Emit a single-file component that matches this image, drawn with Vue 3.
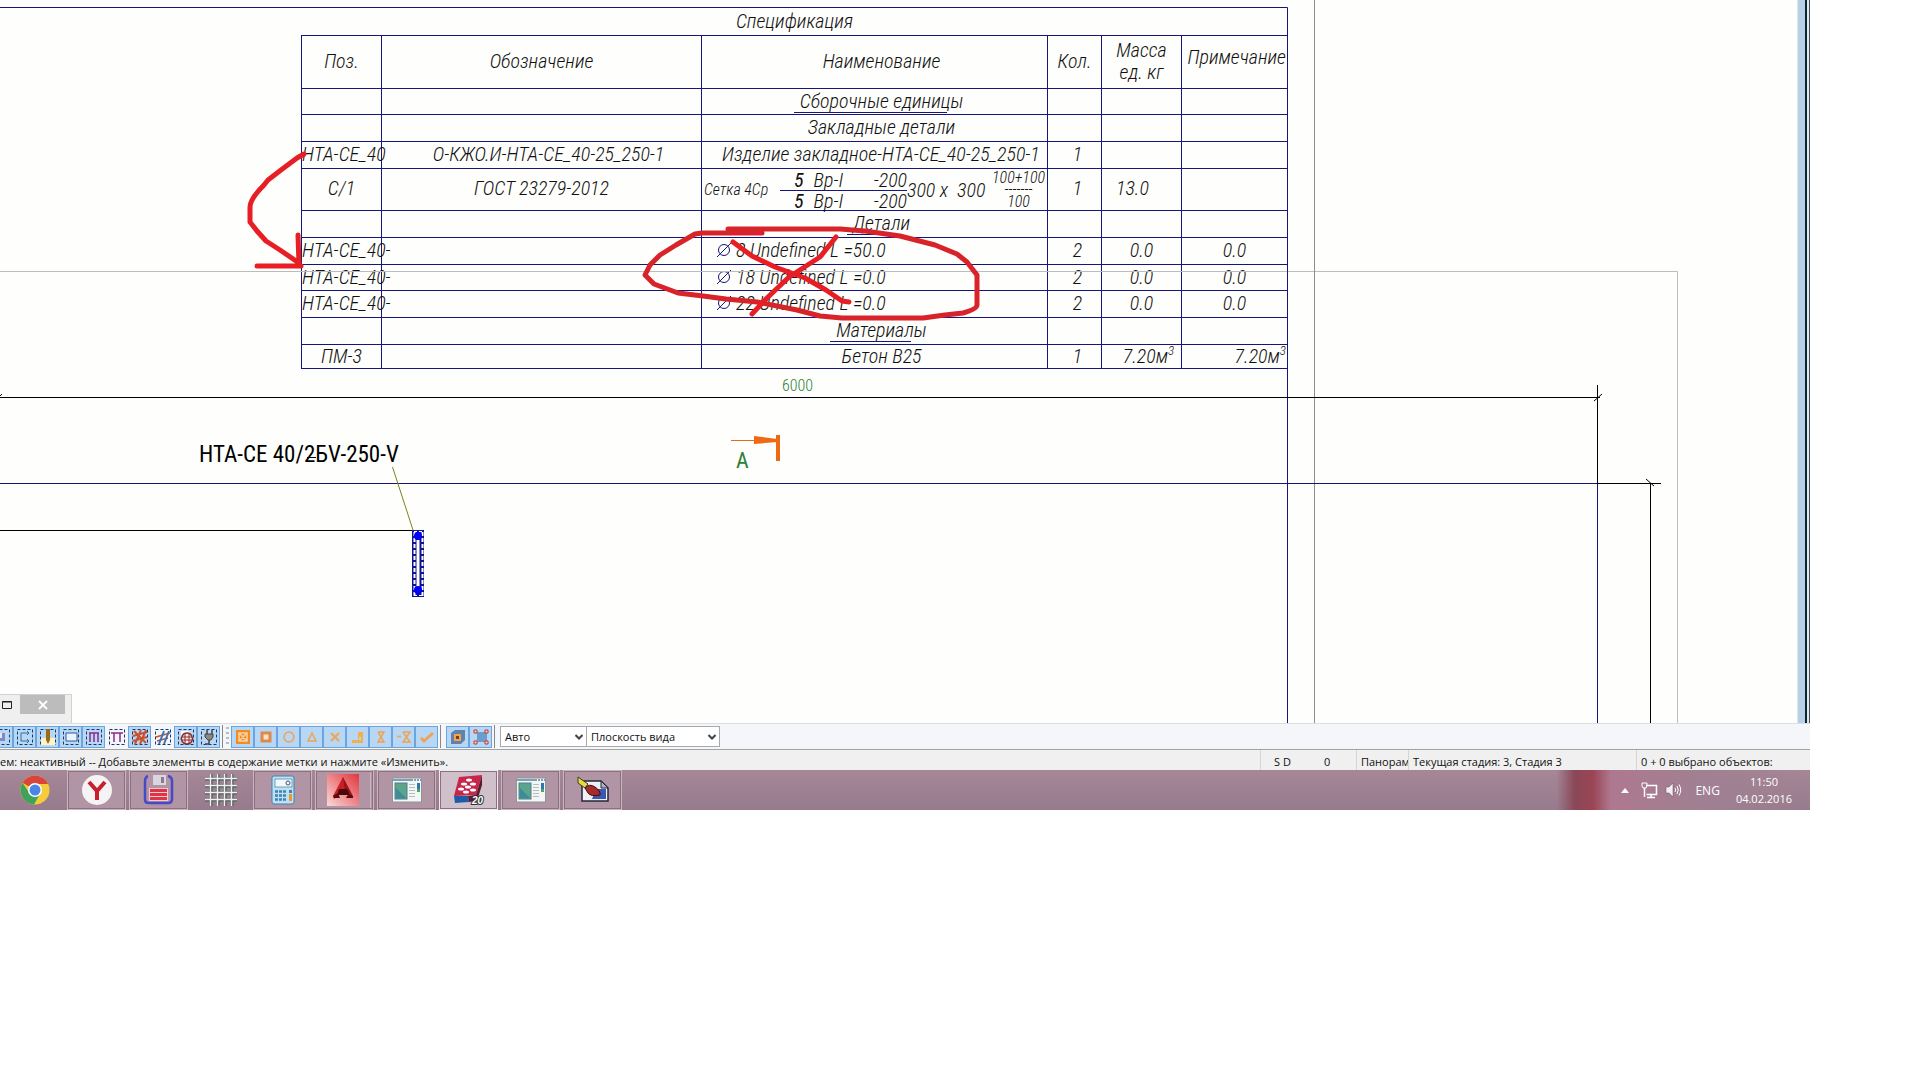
<template>
  <main class="app">
    <section class="canvas" aria-label="Чертёж">
      <div class="sheet">
        <table class="spec">
          <caption>Спецификация</caption>
          <colgroup>
            <col class="c-pos" />
            <col class="c-des" />
            <col class="c-name" />
            <col class="c-qty" />
            <col class="c-mass" />
            <col class="c-note" />
          </colgroup>
          <thead>
            <tr class="head">
              <th scope="col">Поз.</th>
              <th scope="col">Обозначение</th>
              <th scope="col" class="shifted">Наименование</th>
              <th scope="col">Кол.</th>
              <th scope="col">Масса<br />ед. кг</th>
              <th scope="col" class="right high">Примечание</th>
            </tr>
          </thead>
          <tbody>
            <tr v-for="(r, i) in rows" :key="i" :class="r.kind">
              <td :class="{ left: r.overflow }">{{ r.pos }}</td>
              <td :class="{ shifted: r.kind === 'product' }">{{ r.des }}</td>
              <td v-if="r.kind === 'mesh'">
                <div class="mesh-name">
                  <span class="mesh-label">Сетка 4Ср</span>
                  <span class="frac">
                    <span class="frac-line"><b>5</b><span>Вр-I</span><span>-200</span></span>
                    <span class="frac-line under"><b>5</b><span>Вр-I</span><span>-200</span></span>
                  </span>
                  <span class="mesh-size">300 х&nbsp; 300</span>
                  <span class="ratio">
                    <span>100+100</span>
                    <span class="ratio-bar">-------</span>
                    <span>100</span>
                  </span>
                </div>
              </td>
              <td v-else-if="r.bar" class="left">
                <span class="bar-name">
                  <svg class="dia" width="16" height="16" viewBox="0 0 16 16" aria-hidden="true">
                    <circle cx="8" cy="8" r="5.5" />
                    <path d="M1 15 15 1" />
                  </svg>
                  {{ r.name }}
                </span>
              </td>
              <td v-else :class="r.kind === 'product' ? 'indent' : 'shifted'">
                <span :class="{ underlined: r.underlined }">{{ r.name }}</span>
              </td>
              <td class="qty">{{ r.qty }}</td>
              <td :class="{ 'mass-left': r.kind === 'mesh', shifted: r.cubic }">
                {{ r.mass }}<template v-if="r.cubic">м<sup>3</sup></template>
              </td>
              <td :class="r.cubic ? 'right' : 'note'">
                {{ r.note }}<template v-if="r.cubic">м<sup>3</sup></template>
              </td>
            </tr>
          </tbody>
        </table>
      </div>

      <svg class="drawing" width="100%" height="100%">
        <g class="grey">
          <path d="M0 271.500H1677.500V800" />
          <path class="dark" d="M1314.500 0V800" />
        </g>
        <g class="navy">
          <path d="M0 7.500H1287.500V800" />
          <path d="M0 483.500H1597.500V800" />
        </g>
        <g class="black">
          <path d="M0 397.500H1600M1597.500 385V483M1597 483.500H1661M1650.500 483V800M0 530.500H412" />
          <path d="M1594 401 1602 394M1646 479 1654 486M0 396 2 394M307 457.500H316" />
        </g>
        <path class="leader" d="M392.500 467 413 530" />
        <g>
          <rect x="412" y="530" width="12" height="67" fill="#12128c" />
          <path d="M414.500 532V596M422.500 532V596" stroke="#fff" stroke-width="2" stroke-dasharray="4 2" />
          <path d="M418 540V587" stroke="#fff" stroke-width="3" />
          <path d="M414 531.500H423M414 595.500H423" stroke="#fff" stroke-dasharray="3 2" />
          <circle cx="418" cy="536" r="4" fill="#00f" />
          <circle cx="418" cy="590" r="4" fill="#00f" />
        </g>
        <g class="section-mark">
          <path d="M731 440H765V441H731ZM754 436 777 439V442L754 444ZM776 435H780V461H776Z" />
        </g>
        <text class="mark-text" x="199" y="462">НТА-СЕ 40/2БV-250-V</text>
        <text class="dim-text" x="782" y="391">6000</text>
        <text class="section-text" x="736" y="468">А</text>
        <g class="marker">
          <path
            d="M304 154 297 158 281 170 268 180 264 185Q250 199 250 207V222L257 231 266 241 280 250 299 263M298 235 299 265M257 266H301"
          />
          <path
            class="deep"
            d="M762 233H702L695 234 676 245 660 255 650 265 645 275 654 284 678 293 703 296 726 299 757 302 797 310 820 316 842 318H923L945 315 963 313Q977 309 977 305V275L967 262 957 254 935 245 900 236 865 231 840 229H728"
          />
          <path d="M733 242 752 256 775 267 805 278 826 290 842 301 849 302M836 237 820 257 789 277 767 298 752 314" />
        </g>
      </svg>

      <div class="float-window">
        <button type="button" class="restore" aria-label="Развернуть">
          <svg width="12" height="12" viewBox="0 0 12 12"><path d="M1.500 2.500H10.500V9.500H1.500ZM1 3H11" fill="none" stroke="#222" /></svg>
        </button>
        <button type="button" class="close" aria-label="Закрыть">
          <svg width="10" height="10" viewBox="0 0 10 10"><path d="M1 1 9 9M9 1 1 9" stroke="#fff" stroke-width="1.800" /></svg>
        </button>
      </div>
      <div class="edge" aria-hidden="true"></div>
    </section>

    <div class="toolbar" role="toolbar">
      <div v-for="(group, g) in toolGroups" :key="g" class="tool-group" :class="`g${g}`">
        <span v-if="g === 1" class="grip"></span>
        <button
          v-for="t in group"
          :key="t.label"
          type="button"
          class="tool"
          :class="{ on: t.on !== false }"
          :aria-label="t.label"
        >
          <svg width="18" height="18" viewBox="0 0 18 18">
            <rect v-if="t.box" x="1.500" y="1.500" width="15" height="15" class="dash" />
            <path
              v-for="(s, k) in t.shapes"
              :key="k"
              :d="s[0]"
              :fill="s[1]"
              :stroke="s[2] || 'none'"
              :stroke-width="s[3] || 1.5"
            />
          </svg>
        </button>
      </div>
      <span class="pick pick-auto">
        <select v-model="mode" aria-label="Режим">
          <option>Авто</option>
        </select>
        <svg width="8" height="6" viewBox="0 0 8 6"><path d="M0.500 1 4 4.500 7.500 1" /></svg>
      </span>
      <span class="pick pick-plane">
        <select v-model="plane" aria-label="Плоскость">
          <option>Плоскость вида</option>
        </select>
        <svg width="8" height="6" viewBox="0 0 8 6"><path d="M0.500 1 4 4.500 7.500 1" /></svg>
      </span>
    </div>

    <footer class="status">
      <span class="hint">ем: неактивный -- Добавьте элементы в содержание метки и нажмите «Изменить».</span>
      <span class="cell snap"><span>S D</span><span>0</span></span>
      <span class="cell pan">Панорам</span>
      <span class="cell stage">Текущая стадия: 3, Стадия 3</span>
      <span class="cell picked">0 + 0 выбрано объектов:</span>
    </footer>

    <nav class="taskbar">
      <button type="button" class="task flat" aria-label="Chrome">
        <svg width="32" height="32" viewBox="0 0 32 32">
          <circle cx="16" cy="16" r="14.500" fill="#f6cc3a" />
          <path d="M16 16 3.500 8.700A14.500 14.500 0 0 1 28.500 8.700L29 10H16Z" fill="#d9453c" />
          <path d="M3.500 8.700A14.500 14.500 0 0 0 15 30.500L21 20 16 16 9 17Z" fill="#3fa25a" />
          <circle cx="16" cy="16" r="7" fill="#fff" />
          <circle cx="16" cy="16" r="5.500" fill="#4a86e8" />
        </svg>
      </button>
      <button type="button" class="task" aria-label="Яндекс">
        <svg width="32" height="32" viewBox="0 0 32 32">
          <circle cx="16" cy="16" r="15" fill="#f5f3f4" />
          <path d="M8 8 16 17 24 8M16 16V26" fill="none" stroke="#c8202a" stroke-width="4" />
        </svg>
      </button>
      <button type="button" class="task" aria-label="Дискета">
        <svg width="32" height="32" viewBox="0 0 32 32">
          <path d="M5 2Q2 3 2 8V26Q2 29 6 29H25Q29 29 29 25V7Q29 3 25 2" fill="none" stroke="#4848c8" stroke-width="2.500" />
          <rect x="10" y="1" width="13" height="10" fill="#d9d6e2" />
          <rect x="18" y="3" width="3" height="6" fill="#8f7b90" />
          <rect x="6" y="14" width="19" height="13" fill="#f1c9d3" />
          <path d="M7 16.500H24M7 20.500H24M7 24.500H24" stroke="#dc3545" stroke-width="3" />
        </svg>
      </button>
      <button type="button" class="task flat" aria-label="Сетка">
        <svg width="34" height="34" viewBox="0 0 34 34">
          <path d="M7 1V33M14 1V33M21 1V33M28 1V33M1 6H33M1 13H33M1 20H33M1 27H33" stroke="#4e5a58" stroke-width="3" />
          <path d="M6.500 1V33M13.500 1V33M20.500 1V33M27.500 1V33M1 5.500H33M1 12.500H33M1 19.500H33M1 26.500H33" stroke="#eef1ee" stroke-width="1.500" />
        </svg>
      </button>
      <button type="button" class="task" aria-label="Калькулятор">
        <svg width="32" height="32" viewBox="0 0 32 32">
          <rect x="5" y="2" width="22" height="28" rx="2" fill="#bfe0f2" stroke="#3f83b5" />
          <rect x="8" y="5" width="17" height="8" fill="#f2f8fa" stroke="#6f9fb8" />
          <circle cx="21" cy="9" r="2" fill="none" stroke="#385a70" />
          <path d="M8 17.500H20M8 21.500H20M8 25.500H20" stroke="#3f83b5" stroke-width="2.500" stroke-dasharray="3 1" />
          <path d="M23.500 16V19" stroke="#3f83b5" stroke-width="3" />
          <path d="M23.500 20V27" stroke="#e79b2e" stroke-width="3" />
        </svg>
      </button>
      <button type="button" class="task stacked" aria-label="AutoCAD">
        <svg width="32" height="32" viewBox="0 0 32 32">
          <defs>
            <linearGradient id="cad" x1="1" y1="0" x2="0" y2="1">
              <stop offset="0" stop-color="#e0353c" />
              <stop offset="1" stop-color="#fbd9d8" />
            </linearGradient>
          </defs>
          <rect width="32" height="32" fill="url(#cad)" />
          <path d="M16 3 26 22 22 19H11L7 25Z" fill="#9b1218" />
          <path d="M16 3 18 18 14 19 7 25 6 22Z" fill="#c81f25" />
          <path d="M12 15H20L23 21H10Z" fill="#4e0709" />
          <path d="M6 22 11 19 13 24H7ZM26 22 22 19 19 24H26Z" fill="#5d0b0e" />
        </svg>
      </button>
      <button v-for="t in windowTasks" :key="t.label" type="button" class="task" :class="t.cls" :aria-label="t.label">
        <svg v-if="t.cls === 'current'" width="34" height="34" viewBox="0 0 34 34">
          <path d="M7 4 30 2 24 22 2 23Z" fill="#c9254a" />
          <path d="M2 23 16 23 17 29 3 30Z" fill="#1f5aa8" />
          <path d="M24 22 30 2V12L25 28 17 29 16 23Z" fill="#5a1b2c" />
          <g fill="#fff">
            <ellipse cx="17" cy="7" rx="3" ry="1.500" /><ellipse cx="12" cy="11" rx="3" ry="1.500" />
            <ellipse cx="21" cy="11" rx="3" ry="1.500" /><ellipse cx="16" cy="14" rx="3" ry="1.500" />
            <ellipse cx="9" cy="16" rx="3" ry="1.500" /><ellipse cx="21" cy="17" rx="3" ry="1.500" />
            <ellipse cx="14" cy="19" rx="3" ry="1.500" />
          </g>
          <text x="20" y="31" class="badge">20</text>
        </svg>
        <svg v-else-if="t.cls === 'paint'" width="34" height="32" viewBox="0 0 34 32">
          <path d="M6 7H25L32 14V27H6Z" fill="#eef0f4" stroke="#23263a" stroke-width="1.500" />
          <path d="M20 15H30V25H16Z" fill="#3c58b0" />
          <path d="M25 7V14H32Z" fill="#aeb4c2" stroke="#23263a" />
          <path d="M2 3 12 10 9 14 2 9Z" fill="#e6dc3e" stroke="#3c3a20" />
          <path d="M9 14Q13 9 19 13T24 21Q15 23 12 19Z" fill="#a92a2a" stroke="#3a1010" />
        </svg>
        <svg v-else width="32" height="28" viewBox="0 0 32 28">
          <rect x="1.500" y="2" width="29" height="24" fill="#f4f6f6" stroke="#8a9699" />
          <path d="M2 4H30" stroke="#7fa0b0" stroke-width="2" stroke-dasharray="20 1 2 1 2 1" />
          <rect x="4" y="7" width="12" height="16" fill="#5aa58b" stroke="#517c8a" />
          <path d="M5 22V12L15 22Z" fill="#3c8a9a" />
          <path d="M18 8.500H24M18 11.500H24M18 14.500H24M18 17.500H24M18 20.500H24" stroke="#b3bcbf" />
          <rect x="26" y="7" width="3" height="9" fill="#3373b0" />
          <rect x="26" y="13" width="3" height="3" fill="#4aa860" />
        </svg>
      </button>
      <div class="tray">
        <svg width="8" height="5" viewBox="0 0 8 5"><path d="M0 5 4 0 8 5Z" fill="#fff" /></svg>
        <svg class="net" width="17" height="17" viewBox="0 0 17 17">
          <path d="M5 3.500H15.500V12.500H5.500M10 12.500V15.500M6 15.500H14M3.500 6V15" fill="none" stroke="#fff" stroke-width="1.500" />
          <path d="M1 1H6V4L5 6H2L1 4Z" fill="none" stroke="#fff" />
        </svg>
        <svg class="vol" width="17" height="16" viewBox="0 0 17 16">
          <path d="M1 5H4L8 1V15L4 11H1Z" fill="#f4eef2" stroke="#604c58" stroke-width="0.500" />
          <path d="M10 6Q11.500 8 10 10M12 4Q14.500 8 12 12M14 2.500Q17.500 8 14 13.500" fill="none" stroke="#fff" />
        </svg>
        <span class="lang">ENG</span>
        <time class="clock">11:50<br />04.02.2016</time>
      </div>
    </nav>
  </main>
</template>

<script setup>
import { ref } from 'vue'

const mode = ref('Авто')
const plane = ref('Плоскость вида')

const rows = [
  { kind: 'short', name: 'Сборочные единицы', underlined: true },
  { kind: 'group', name: 'Закладные детали' },
  {
    kind: 'product',
    pos: 'НТА-СЕ_40',
    des: 'О-КЖО.И-НТА-СЕ_40-25_250-1',
    name: 'Изделие закладное-НТА-СЕ_40-25_250-1',
    qty: 1,
    overflow: true,
  },
  { kind: 'mesh', pos: 'С/1', des: 'ГОСТ 23279-2012', qty: 1, mass: '13.0' },
  { kind: 'group', name: 'Детали', underlined: true },
  { bar: true, pos: 'НТА-СЕ_40-', name: '8 Undefined L =50.0', qty: 2, mass: '0.0', note: '0.0', overflow: true },
  { bar: true, kind: 'short', pos: 'НТА-СЕ_40-', name: '18 Undefined L =0.0', qty: 2, mass: '0.0', note: '0.0', overflow: true },
  { bar: true, pos: 'НТА-СЕ_40-', name: '22 Undefined L =0.0', qty: 2, mass: '0.0', note: '0.0', overflow: true },
  { kind: 'group', name: 'Материалы', underlined: true },
  { kind: 'concrete', pos: 'ПМ-3', name: 'Бетон В25', qty: 1, mass: '7.20', note: '7.20', cubic: true },
]

const orange = '#efa353'
const rust = '#c9502c'
const purple = '#8a2d8c'

// each shape: [path, fill, stroke, stroke width]
const toolGroups = [
  [
    { label: 'Узел', box: true, shapes: [['M4 5H12V13H4Z', '#7f88cf'], ['M4 5H9V10H4Z', '#e6ebfa']] },
    { label: 'Контур', box: true, shapes: [['M13 5H5V13H13M11 3 13 5 11 7M11 11 13 13 11 15', 'none', '#2f6f9f', 1]] },
    { label: 'Стержень', box: true, shapes: [['M2 10H16V17H2Z', '#fff3c9'], ['M7 1H11V12L9 16 7 12Z', '#9a6c12']] },
    { label: 'Плита', box: true, shapes: [['M4 5H15V13H4Z', '#eaf3fc', '#2c5c9a', 1]] },
    { label: 'Хомуты', box: true, shapes: [['M4 5H14M5 5V14M9 5V14M13 5V14', 'none', purple]] },
    { label: 'Скобы', box: true, on: false, shapes: [['M3 5H15M6 5V14M12 5V14', 'none', purple]] },
    { label: 'Сетки', box: true, shapes: [['M2 8 16 4M2 13 16 9M4 16 10 2M9 16 15 2M3 3 15 15', 'none', rust, 2]] },
    { label: 'Пересечения', box: true, on: false, shapes: [['M2 9 16 5M3 13 14 10', 'none', rust], ['M5 16 10 3M10 16 15 3', 'none', '#3278bd', 2]] },
    {
      label: 'Глобус',
      box: true,
      shapes: [
        ['M4 3H11L14 6V9H4Z', '#fff'],
        ['M10 5A5.500 5.500 0 1 1 9.900 5Z', '#f7eeee', '#8c2b2b'],
        ['M8 6V15M12 6V15M5 9H15M5 12H15', 'none', '#8c2b2b', 1],
      ],
    },
    { label: 'Разъём', box: true, shapes: [['M5 6H13V9L11 12H8L5 9Z', '#8a8a80', '#444', 1], ['M7 2V6M12 2V6M9 12V16H5', 'none', '#444', 1.5]] },
  ],
  [
    { label: 'Все точки', shapes: [['M2 2H16V16H2Z', '#f08a2a'], ['M5 5H13V13H5ZM5 5 13 13M13 5 5 13', 'none', '#fbd5a0']] },
    { label: 'Конечная точка', shapes: [['M5 5H13V13H5Z', '#f9e3c8', '#dd8a4c', 3]] },
    { label: 'Центр', shapes: [['M9 4A5 5 0 1 1 8.900 4Z', 'none', orange]] },
    { label: 'Середина', shapes: [['M9 5 13 13H5Z', 'none', orange]] },
    { label: 'Пересечение', shapes: [['M5 5 13 13M13 5 5 13', 'none', orange, 2]] },
    { label: 'Перпендикуляр', shapes: [['M3 15V12H9V4H14V15Z', '#f0b050'], ['M10 9H12V12H10Z', '#b8d7f4']] },
    { label: 'Ближайшая', shapes: [['M6 4H12L6 14H12L6 4', 'none', orange]] },
    { label: 'Мнимая', shapes: [['M8 4H15L8 14H15L8 4M2 8.500H6', 'none', orange]] },
    { label: 'Принять', shapes: [['M3 10 6 13 15 5', 'none', orange, 3]] },
  ],
  [
    { label: 'Привязка', shapes: [['M2 5 6 2H16V12L12 16H2Z', '#5f83ac'], ['M5 6H12V13H5Z', '#f3a14a'], ['M7 8H10V11H7Z', '#7a3c20']] },
    { label: 'Рамка', shapes: [['M5 4H15V14H5Z', '#6c9ccb'], ['M2 2H5V5H2ZM13 2H16V5H13ZM2 13H5V16H2ZM13 13H16V16H13Z', '#f6d5c8', '#bb3a30', 1]] },
  ],
]

const windowTasks = [
  { label: 'Окно 1', cls: 'plain' },
  { label: 'Allplan', cls: 'current' },
  { label: 'Окно 2', cls: 'plain' },
  { label: 'Paint', cls: 'paint' },
]
</script>

<style>
body {
  margin: 0;
  background: #fff;
}
</style>

<style scoped>
.app {
  margin-right: 110px;
  font-family: 'Open Sans', 'Noto Sans', sans-serif;
  font-size: 11px;
  color: #111;
}

.canvas {
  position: relative;
  overflow: hidden;
  background: #fefefc;
  border-bottom: 1px solid #dcdfe2;
  font-family: 'Roboto Condensed', 'Liberation Sans Narrow', 'Liberation Sans', sans-serif;
}

.sheet {
  padding: 8px 0 354px 301px;
}

.spec {
  width: 987px;
  table-layout: fixed;
  border-collapse: collapse;
  font-size: 20px;
  line-height: 20px;
  font-style: italic;
  font-weight: 300;
  color: #111;
}

.spec caption {
  height: 27px;
  line-height: 26px;
}

.c-pos { width: 80px; }
.c-des { width: 320px; }
.c-name { width: 346px; }
.c-qty { width: 54px; }
.c-mass { width: 80px; }
.c-note { width: 106px; }

.spec th,
.spec td {
  box-sizing: border-box;
  height: 27px;
  padding: 0 0 2px;
  border: 1px solid #15157c;
  font-weight: 300;
  text-align: center;
  white-space: nowrap;
}

.spec .head th { height: 53px; line-height: 22px; }
.spec .short td { height: 26px; }
.spec .mesh td { height: 42px; padding-bottom: 4px; }
.spec .concrete td { height: 24px; }
.spec .left { text-align: left; }
.spec .right { text-align: right; padding-right: 1px; }
.spec .head .high { padding-bottom: 10px; }
.spec .shifted { padding-left: 14px; }
.spec .indent { text-align: left; padding-left: 20px; }
.spec td.qty { padding-left: 6px; }
.spec td.mass-left { text-align: left; padding-left: 14px; }
.spec .mesh td:has(.mesh-name) { padding: 0; }

.spec sup {
  font-size: 13px;
  line-height: 8px;
}

.underlined {
  position: relative;
}

.underlined::after {
  content: '';
  position: absolute;
  left: -6px;
  right: 16px;
  bottom: 0;
  border-bottom: 1px solid #15157c;
}

.bar-name {
  display: flex;
  align-items: center;
  gap: 4px;
  padding-left: 14px;
}

.dia {
  fill: none;
  stroke: #15157c;
}

.mesh-name {
  display: flex;
  align-items: center;
  height: 41px;
  padding-left: 2px;
  text-align: left;
}

.mesh-label {
  width: 76px;
  font-size: 16px;
}

.frac {
  width: 127px;
}

.frac-line {
  display: flex;
  gap: 10px;
  padding-left: 14px;
  height: 20px;
}

.frac-line b {
  font-weight: 400;
}

.frac-line span:last-child {
  margin-left: auto;
}

.frac-line.under {
  height: 19px;
  border-top: 1px solid #15157c;
}

.mesh-size {
  flex: 1;
}

.ratio {
  display: grid;
  justify-items: center;
  padding-right: 2px;
  font-size: 16px;
  line-height: 16px;
}

.ratio-bar {
  line-height: 8px;
}

.drawing {
  position: absolute;
  inset: 0;
  fill: none;
  pointer-events: none;
}

.grey { stroke: #bcbcbc; }
.grey .dark { stroke: #8e8e8e; }
.navy { stroke: #15157c; }
.black { stroke: #000; }
.leader { stroke: #808020; }
.section-mark { fill: #f06814; }

.marker {
  stroke: #e81e25;
  stroke-width: 5;
  stroke-linecap: round;
  stroke-linejoin: round;
}

.marker .deep { stroke: #d8232a; }

.mark-text {
  fill: #000;
  font-size: 23px;
}

.dim-text {
  fill: #2b8038;
  font-size: 16px;
  font-weight: 300;
}

.section-text {
  fill: #2b8038;
  font-size: 22px;
}

.float-window {
  position: absolute;
  left: 0;
  bottom: 0;
  display: flex;
  gap: 6px;
  width: 71px;
  height: 28px;
  background: #efefef;
  border-top: 1px solid #d2d2d2;
  border-right: 1px solid #d2d2d2;
}

.float-window button {
  display: grid;
  place-items: center;
  height: 19px;
  padding: 0;
  border: 0;
  background: transparent;
}

.float-window .restore { width: 14px; }
.float-window .close { width: 45px; background: #bcbcbc; }

.edge {
  position: absolute;
  top: 0;
  right: 0;
  bottom: 0;
  width: 5px;
  border-left: 7px solid #b8d0e6;
  background: linear-gradient(90deg, #0b2530 0 2px, #dce9f5 2px 4px, #4c4c55 4px);
  outline: 1px solid #dfe5ea;
}

.toolbar {
  display: flex;
  align-items: center;
  height: 25px;
  background: #f4f6f9;
  border-bottom: 1px solid #a0a4a2;
  overflow: hidden;
}

.tool-group {
  display: flex;
  align-items: center;
  height: 23px;
  padding-right: 2px;
  border-right: 1px solid #85898c;
}

.tool-group.g0 { margin-left: -10px; }
.tool-group.g2 { padding-left: 5px; margin-right: 5px; }

.grip {
  width: 3px;
  height: 19px;
  margin: 0 2px 0 3px;
  background: repeating-linear-gradient(#b9bdc2 0 2px, transparent 2px 5px);
}

.tool {
  display: grid;
  place-items: center;
  box-sizing: border-box;
  width: 23px;
  height: 22px;
  padding: 0;
  border: 1px solid transparent;
  background: transparent;
}

.tool.on {
  background: #b8d7f4;
  border-color: #6ba5df;
}

.dash {
  fill: none;
  stroke: #163a6c;
  stroke-dasharray: 3 2;
}

.pick {
  position: relative;
  display: flex;
  align-items: center;
}

.pick-auto { width: 87px; }
.pick-plane { width: 134px; margin-left: -1px; }

.pick select {
  appearance: none;
  width: 100%;
  height: 21px;
  padding: 0 20px 0 4px;
  border: 1px solid #a6a9ad;
  border-radius: 0;
  background: #fff;
  color: #111;
  font-family: inherit;
  font-size: 11px;
}

.pick svg {
  position: absolute;
  right: 4px;
  fill: none;
  stroke: #444;
  stroke-width: 2;
  pointer-events: none;
}

.status {
  display: flex;
  height: 20px;
  line-height: 23px;
  background: #f0f0f0;
  white-space: nowrap;
  overflow: hidden;
}

.hint {
  flex: 1;
  min-width: 0;
  overflow: hidden;
}

.cell {
  box-sizing: border-box;
  padding-left: 4px;
  border-left: 1px solid #d4d4d4;
  overflow: hidden;
}

.snap {
  display: flex;
  gap: 33px;
  width: 96px;
  padding-left: 13px;
}

.pan { width: 52px; }
.stage { width: 228px; }
.picked { width: 174px; }

.taskbar {
  display: flex;
  gap: 3px;
  box-sizing: border-box;
  height: 40px;
  padding-left: 5px;
  background:
    linear-gradient(90deg, transparent 86%, #8a4858 87%, #9a4555 88%, #ae7890 89%, #a08092 94%, transparent),
    linear-gradient(#a58797, #977b8c);
}

.task {
  display: grid;
  place-items: center;
  box-sizing: border-box;
  width: 59px;
  height: 40px;
  padding: 0;
  border: 1px solid #c9b5c0;
  outline: 1px solid #8b7080;
  outline-offset: -2px;
  background: #b195a5;
}

.task.flat {
  border-color: transparent;
  outline: 0;
  background: transparent;
}

.task.current {
  border-color: #f1e9ee;
  background: #cfc0c9;
}

.task.stacked {
  border-right: 4px double #c9b5c0;
}

.badge {
  fill: #fff;
  stroke: #333;
  stroke-width: 2px;
  paint-order: stroke;
  font-size: 10px;
  font-weight: 700;
  font-style: italic;
}

.tray {
  display: flex;
  align-items: center;
  margin-left: auto;
  padding-right: 18px;
  color: #fff;
}

.net { margin-left: 12px; }
.vol { margin-left: 7px; }
.lang { margin-left: 13px; font-size: 12px; }

.clock {
  margin-left: 16px;
  line-height: 17px;
  text-align: center;
}
</style>
